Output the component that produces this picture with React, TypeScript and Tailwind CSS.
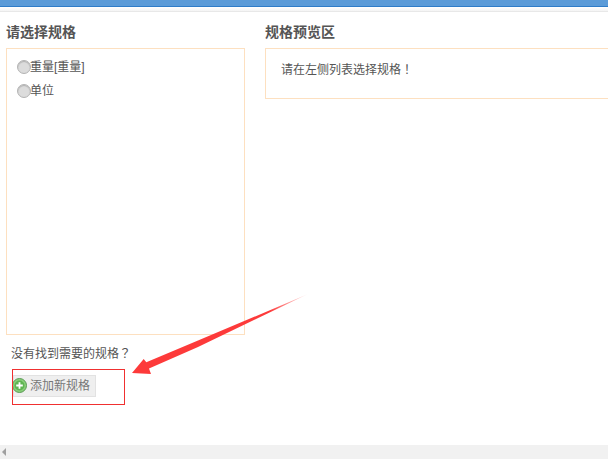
function Radio({ label }: { label: string }) {
  return (
    <label className="flex items-center h-6 text-xs text-[#555]">
      <span className="w-[14px] h-[14px] -mr-px rounded-full border border-[#b4b4b4] bg-[#dcdcdc] shadow-[inset_0_1px_1px_#b0b0b0]" />
      <span>{label}</span>
    </label>
  );
}

// the ？ and ！ sit centred in their cell in the picture, as in the TC font
function Punct({ children }: { children: string }) {
  return <span className="font-['Noto_Sans_CJK_TC',sans-serif]">{children}</span>;
}

export default function App() {
  return (
    <div className="relative w-[608px] h-[459px] overflow-hidden bg-white flex flex-col font-['Liberation_Sans','Noto_Sans_CJK_SC',sans-serif]">
      <div className="h-[6px] bg-[#5b9bd8] shrink-0" />
      <div className="h-px bg-[#2f7cc8] shrink-0" />
      <div className="h-[5px] bg-gradient-to-b from-white to-[#f4f4f4] border-b border-[#e8e8e8] shrink-0" />
      <div className="flex-1 flex pl-[6px] gap-5 pt-[10px]">
        <div className="w-[239px] shrink-0">
          <h3 className="text-sm font-bold text-[#555] leading-[20px] h-[26px]">请选择规格</h3>
          <div className="h-[287px] border border-[#fde0c0] pl-[10px] pt-[6px]">
            <Radio label="重量[重量]" />
            <Radio label="单位" />
          </div>
          <p className="mt-[9px] pl-[5px] text-xs leading-[18px] text-[#555]">
            没有找到需要的规格<Punct>？</Punct>
          </p>
          <button className="mt-[12px] ml-[7px] h-[22px] w-[83px] flex items-center gap-[3px] bg-[#efefef] border border-[#e2e2e2] text-xs text-[#777]">
            <svg width="15" height="15" viewBox="0 0 15 15" className="shrink-0 -ml-[2px] -mt-[2px]">
              <circle cx="7.5" cy="7.5" r="7" fill="#8ad07a" stroke="#5a9a55" />
              <circle cx="7.5" cy="7.5" r="5" fill="#5fb552" />
              <path d="M7.5 4.2v6.6M4.2 7.5h6.6" stroke="#fff" strokeWidth="1.8" />
            </svg>
            添加新规格
          </button>
        </div>
        <div className="w-[400px] shrink-0">
          <h3 className="text-sm font-bold text-[#555] leading-[20px] h-[26px]">规格预览区</h3>
          <div className="h-[51px] border border-[#fde0c0] pl-[15px] pt-[11px] text-xs leading-[18px] text-[#555]">
            请在左侧列表选择规格<Punct>！</Punct>
          </div>
        </div>
      </div>
      <div className="h-[14px] bg-[#f1f1f1] shrink-0 flex items-center pl-[2px]">
        <span className="w-0 h-0 border-y-[4px] border-y-transparent border-r-[4px] border-r-[#a0a0a0]" />
      </div>

      <div className="absolute left-[12px] top-[369px] w-[113px] h-[36px] border border-[#f03030]" />
      <svg className="absolute left-0 top-0 pointer-events-none" width="608" height="459">
        <defs>
          <linearGradient id="tail" x1="308" y1="294" x2="270" y2="311" gradientUnits="userSpaceOnUse">
            <stop offset="0" stopColor="#fff0f0" />
            <stop offset="1" stopColor="#fd3a3a" />
          </linearGradient>
        </defs>
        <path
          d="M132 373 L143.7 359 L146.3 362.3 L198 340.6 L308 294 L198 347 L149 368.6 L151 374 Z"
          fill="url(#tail)"
        />
      </svg>
    </div>
  );
}
